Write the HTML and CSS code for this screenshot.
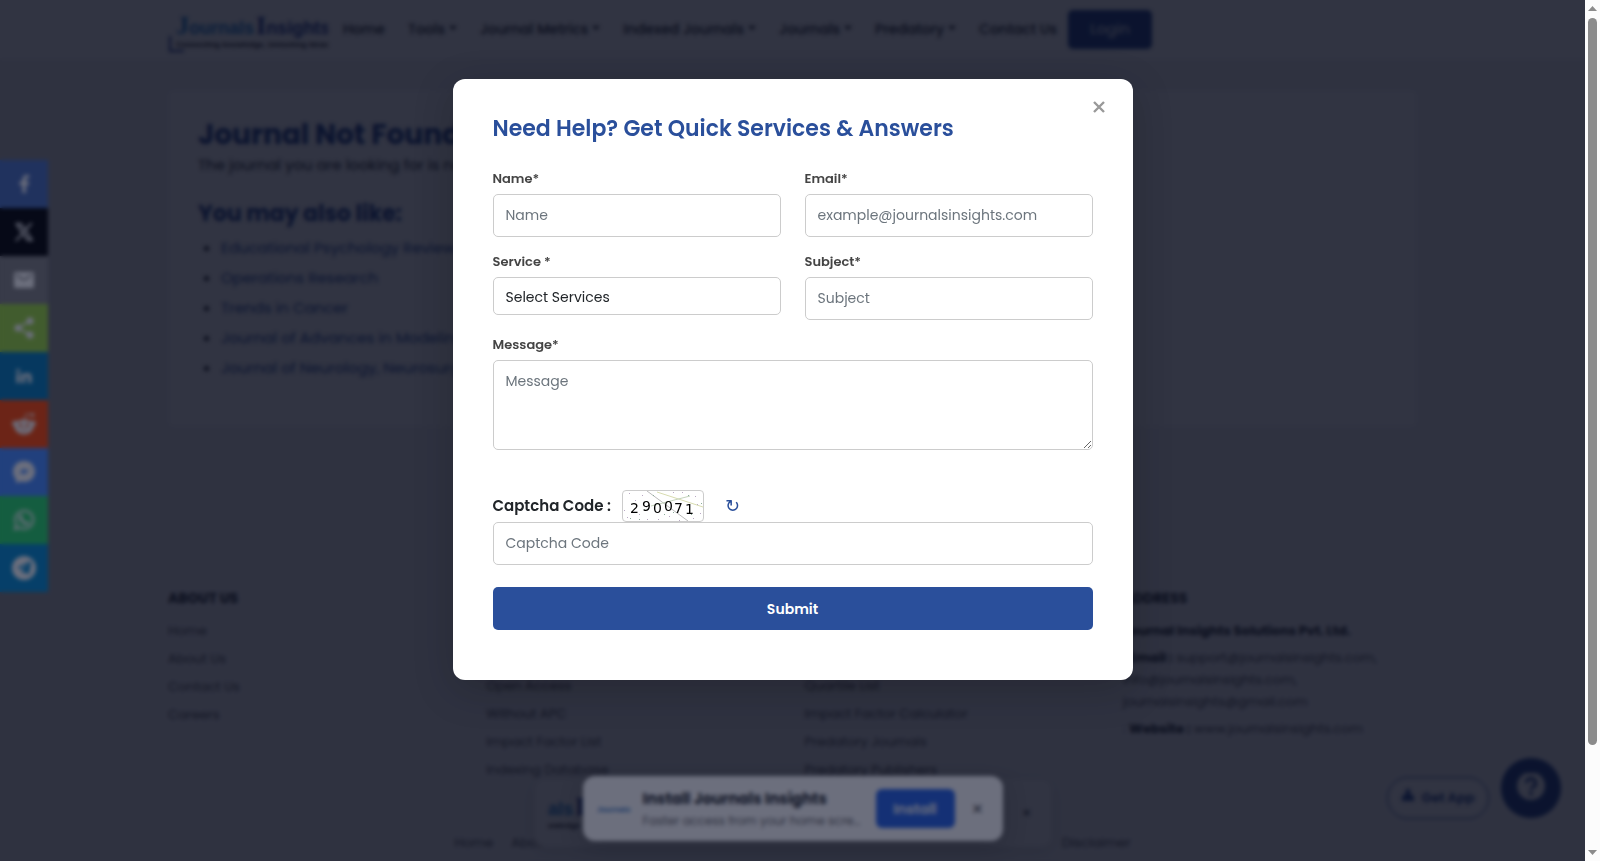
FILE: index.html
```html
<!DOCTYPE html>
<html lang="en">
<head>
<meta charset="utf-8">
<title>Journals Insights</title>
<link rel="stylesheet" href="styles.css">
</head>
<body>
<div class="viewport">
  <header class="topbar">
    <div class="container nav">
      <a class="logo" href="#" aria-label="Journals Insights">
        <svg width="160" height="42" viewBox="0 0 160 42">
          <path d="M2 24v15h14" fill="none" stroke="#1f3d94" stroke-width="2"/>
          <text x="8" y="22" class="logo-a">J<tspan class="logo-small">ournals</tspan></text>
          <text x="88" y="22" class="logo-b">I<tspan class="logo-small">nsights</tspan></text>
          <text x="8" y="35" class="logo-tag">Connecting knowledge, Unlocking Ideas</text>
        </svg>
      </a>
      <nav class="menu">
        <a href="#">Home</a>
        <a class="drop" href="#">Tools</a>
        <a class="drop" href="#">Journal Metrics</a>
        <a class="drop" href="#">Indexed Journals</a>
        <a class="drop" href="#">Journals</a>
        <a class="drop" href="#">Predatory</a>
        <a href="#">Contact Us</a>
      </nav>
      <button class="login" type="button">Login</button>
    </div>
  </header>

  <main class="container article">
    <h1>Journal Not Found</h1>
    <p>The journal you are looking for is not available.</p>
    <h2>You may also like:</h2>
    <ul>
      <li><a href="#">Educational Psychology Review</a></li>
      <li><a href="#">Operations Research</a></li>
      <li><a href="#">Trends in Cancer</a></li>
      <li><a href="#">Journal of Advances in Modeling</a></li>
      <li><a href="#">Journal of Neurology, Neurosurgery</a></li>
    </ul>
  </main>

  <footer class="container footer">
    <div>
      <h3>ABOUT US</h3>
      <a href="#">Home</a><a href="#">About Us</a><a href="#">Contact Us</a><a href="#">Careers</a>
    </div>
    <div class="lower">
      <a href="#">Open Access</a><a href="#">Without APC</a><a href="#">Impact Factor List</a><a href="#">Indexing Database</a>
    </div>
    <div class="lower">
      <a href="#">Quartile List</a><a href="#">Impact Factor Calculator</a><a href="#">Predatory Journals</a><a href="#">Predatory Publishers</a>
    </div>
    <div>
      <h3>ADDRESS</h3>
      <p><b>Journal Insights Solutions Pvt. Ltd.</b></p>
      <p>: <b>Email :</b> support@journalsinsights.com,<br>info@journalsinsights.com,<br>journalsinsights@gmail.com</p>
      <p>: <b>Website :</b> www.journalsinsights.com</p>
    </div>
  </footer>
  <div class="legal"><span><a href="#">Home</a><a href="#">About Us</a></span><a href="#">Disclaimer</a></div>

  <div class="old-banner">
    <svg width="50" height="36" viewBox="0 0 50 36"><text x="0" y="20" class="ghost-a">als</text><text x="27" y="20" class="ghost-b">I</text><text x="0" y="33" class="ghost-tag">owledge</text></svg>
    <span>×</span>
  </div>
  <button class="get-app" type="button">
    <svg width="14" height="20" viewBox="0 0 14 20"><path d="M5 1h4v5h3l-5 5-5-5h3zM1 8h3l3 3 3-3h3v5H1z" fill="#2a4f9b"/></svg>
    Get App
  </button>
  <button class="help" type="button" aria-label="Help">
    <svg width="30" height="30" viewBox="0 0 30 30"><circle cx="15" cy="13" r="14" fill="#fff"/><path d="M10.500 10a4.500 4.500 0 1 1 6.500 4c-1.500.8-2 1.400-2 2.500" fill="none" stroke="#20408c" stroke-width="3"/><circle cx="15" cy="20.500" r="2" fill="#20408c"/></svg>
  </button>
  <div class="page-shade"></div>

  <aside class="share">
    <a class="fb" href="#" aria-label="Facebook"><svg viewBox="0 0 24 24"><path d="M13.800 21v-8h2.800l.5-3.300h-3.300V7.600c0-1 .5-1.700 1.900-1.700h1.500V3.200C16.600 3.100 15.800 3 15 3c-2.700 0-4.500 1.600-4.500 4.400v2.300h-3V13h3v8z"/></svg></a>
    <a class="x" href="#" aria-label="X"><svg viewBox="0 0 24 24"><path fill-rule="evenodd" d="M3 3h6.200l4.200 5.800L18.500 3h2.300l-6.400 7.200L21.500 21h-6.200l-4.700-6.400L5 21H2.700l6.900-7.800zM6.300 4.700l9.800 14.600h2.200L8.500 4.700z"/></svg></a>
    <a class="mail" href="#" aria-label="Email"><svg viewBox="0 0 24 24"><path d="M3.500 4h17A1.500 1.500 0 0 1 22 5.500v13a1.500 1.500 0 0 1-1.500 1.500h-17A1.500 1.500 0 0 1 2 18.500v-13A1.500 1.500 0 0 1 3.500 4zm.5 2v2l8 5 8-5V6l-8 5z" fill-rule="evenodd"/></svg></a>
    <a class="st" href="#" aria-label="Share"><svg viewBox="0 0 24 24"><path d="M18 5 6 12l12 7" fill="none" stroke="#fff" stroke-width="2"/><circle cx="18" cy="5" r="3.500"/><circle cx="6" cy="12" r="3.500"/><circle cx="18" cy="19" r="3.500"/></svg></a>
    <a class="li" href="#" aria-label="LinkedIn"><svg viewBox="0 0 24 24"><path d="M4.500 9.500h3.200V19H4.500zM6.100 5a1.800 1.800 0 1 1 0 3.600 1.800 1.800 0 0 1 0-3.600zM9.700 9.500h3v1.300c.5-.9 1.500-1.600 3-1.600 3.200 0 3.800 2 3.800 4.700V19h-3.200v-4.600c0-1.100 0-2.500-1.600-2.500s-1.800 1.200-1.800 2.400V19H9.700z"/></svg></a>
    <a class="rd" href="#" aria-label="Reddit"><svg viewBox="0 0 24 24"><path d="M12.500 8 14 2l5 1" fill="none" stroke="#fff" stroke-width="1"/><circle cx="20.500" cy="3" r="1.800"/><circle cx="3" cy="11.500" r="2.700"/><circle cx="21" cy="11.500" r="2.700"/><path fill-rule="evenodd" d="M12 7.500c5.500 0 9.500 3 9.500 7s-4 8-9.500 8-9.500-4-9.500-8 4-7 9.500-7zM8.500 11.500a1.800 1.800 0 1 0 0 3.600 1.800 1.800 0 0 0 0-3.600zm7 0a1.800 1.800 0 1 0 0 3.600 1.800 1.800 0 0 0 0-3.600zM7.500 17c2.500 2.300 6.500 2.300 9 0-2.500 1-6.500 1-9 0z"/></svg></a>
    <a class="ms" href="#" aria-label="Messenger"><svg viewBox="0 0 24 24"><path fill-rule="evenodd" d="M12 1c6.500 0 11 4.700 11 10.500S18.500 22 12 22c-1.200 0-2.300-.2-3.300-.5L4 23v-4C2 17 1 14.500 1 11.500 1 5.700 5.500 1 12 1zM5.500 14.500l3.800-2 2.700 2 6.500-5.500-4 1.500-2.500-2z"/></svg></a>
    <a class="wa" href="#" aria-label="WhatsApp"><svg viewBox="0 0 24 24"><path d="m3 21 1.400-4.700a9 9 0 1 1 3.500 3.400z" fill="none" stroke="#fff" stroke-width="2"/><path d="M8.500 6.500 10 7l1 2.500-1 1.300c.8 1.600 2 2.700 3.500 3.400l1.200-1.300L17.300 14c0 2-1.300 3-3 3-4-.7-7-4-7.300-7.500 0-1.200.6-2.500 1.500-3z"/></svg></a>
    <a class="tg" href="#" aria-label="Telegram"><svg viewBox="0 0 24 24"><path fill-rule="evenodd" d="M12 0a12 12 0 1 1 0 24 12 12 0 0 1 0-24zM4.800 11.800l3.700 1.300L17 7.500l-7 6.500v4l2.300-2.300 3.500 2.600c.6.300 1 .1 1.200-.6L19.200 6.500c.2-.9-.3-1.300-1-1z"/></svg></a>
  </aside>
  <div class="install">
    <svg width="34" height="10" viewBox="0 0 34 10"><text x="0" y="8" class="mini-logo">Journals</text></svg>
    <div class="install-copy"><strong>Install Journals Insights</strong><span>Faster access from your home screen</span></div>
    <button class="install-go" type="button">Install</button>
    <button class="install-close" type="button" aria-label="Dismiss">×</button>
  </div>

  <div class="modal-shade">
    <form class="modal" role="dialog" aria-labelledby="modal-title">
      <button class="close" type="button" aria-label="Close"><svg width="12" height="12" viewBox="0 0 12 12"><path d="m1 1 10 10M11 1 1 11" stroke="#999" stroke-width="2.400" fill="none"/></svg></button>
      <h2 id="modal-title">Need Help? Get Quick Services &amp; Answers</h2>
      <div class="fields">
        <div class="field"><label for="name">Name*</label><input id="name" type="text" placeholder="Name"></div>
        <div class="field"><label for="email">Email*</label><input id="email" type="email" placeholder="example@journalsinsights.com"></div>
        <div class="field"><label for="service">Service *</label><select id="service"><option>Select Services</option></select></div>
        <div class="field"><label for="subject">Subject*</label><input id="subject" type="text" placeholder="Subject"></div>
        <div class="field wide"><label for="message">Message*</label><textarea id="message" placeholder="Message"></textarea></div>
      </div>
      <div class="captcha">
        <label for="captcha">Captcha Code :</label>
        <svg class="captcha-img" width="80" height="30" viewBox="0 0 80 30">
          <path d="m24 0 41 30" stroke="#bbb" fill="none"/><path d="m34 1 46 15" stroke="#d8dcb0" fill="none"/><path d="m28 15 39-10" stroke="#c5d4bd" fill="none"/>
          <g fill="#b9a8c4"><path d="M6 2h1v1H6zM12 9h1v1h-1zM4 26h1v1H4zM16 23h1v1h-1zM24 28h1v1h-1zM19 4h1v1h-1zM50 1h1v1h-1zM59 1h1v1h-1zM72 5h1v1h-1zM77 22h1v1h-1zM70 27h1v1h-1zM46 25h1v1h-1zM56 29h1v1h-1zM35 28h1v1h-1zM1 19h1v1H1zM74 13h1v1h-1z"/></g>
          <g fill="#8dae9b"><path d="M9 20h1v1H9zM21 18h1v1h-1zM7 27h1v1H7zM16 28h1v1h-1zM41 23h1v1h-1zM50 21h1v1h-1zM65 4h1v1h-1zM78 12h1v1h-1zM68 23h1v1h-1zM30 4h1v1h-1z"/></g>
          <g class="digits"><text x="7" y="22">2</text><text x="19" y="20">9</text><text x="30" y="22">0</text><text x="41" y="20">0</text><text x="51" y="22">7</text><text x="62" y="23">1</text></g>
        </svg>
        <button class="refresh" type="button" aria-label="Refresh captcha">↻</button>
      </div>
      <input id="captcha" type="text" placeholder="Captcha Code">
      <button class="submit" type="submit">Submit</button>
    </form>
  </div>
</div>
<div class="scrollbar">
  <svg width="9" height="5" viewBox="0 0 9 5"><path d="M0 5 4.500 0 9 5z" fill="#8b8b8b"/></svg>
  <div class="thumb"></div>
  <svg class="down" width="9" height="5" viewBox="0 0 9 5"><path d="M0 0 4.500 5 9 0z" fill="#8b8b8b"/></svg>
</div>
</body>
</html>
```

FILE: styles.css
```css
* { box-sizing: border-box; }

body {
  margin: 0;
  height: 100vh;
  display: flex;
  overflow: hidden;
  font-family: Poppins, Inter, "Open Sans", sans-serif;
  font-size: 15px;
  line-height: 24px;
  color: #212529;
}

button, input, select, textarea { font: inherit; }
button { border: 0; cursor: pointer; }
a { color: inherit; text-decoration: none; }
h1, h2, h3, p, ul { margin: 0; }

.viewport {
  position: relative;
  flex: 1;
  min-width: 0;
  overflow: hidden;
  background: #f5f6f7;
}

.container { width: calc(100% - 336px); margin: 0 auto; }

/* Header */
.topbar { background: #fff; height: 60px; }
.nav { display: flex; align-items: center; height: 58px; }
.logo { display: flex; margin-right: 15px; padding-top: 8px; }
.logo-a, .logo-b { font: bold 26px "Liberation Serif", serif; fill: #1c7fd0; }
.logo-b { fill: #1f3d94; }
.logo-small { font: bold 18px "Liberation Sans", sans-serif; }
.logo-tag { font: bold 8px "Liberation Sans", sans-serif; fill: #222; }
.menu { display: flex; gap: 23px; font-size: 14px; font-weight: 500; white-space: nowrap; }
.drop::after {
  content: "";
  display: inline-block;
  margin-left: 4px;
  vertical-align: 4px;
  border: 4px solid transparent;
  border-top-color: #212529;
  border-bottom: 0;
}
.login {
  margin-left: 11px;
  width: 84px;
  height: 39px;
  border-radius: 5px;
  background: #20408c;
  color: #fff;
}

/* Article */
.article {
  margin-top: 30px;
  padding: 28px 30px 44px;
  background: #fff;
  border-radius: 6px;
}
.article h1 { font-size: 28px; line-height: 34px; color: #20408c; }
.article p { margin-top: 1px; }
.article h2 { margin-top: 21px; font-size: 22px; line-height: 32px; color: #20408c; }
.article ul { margin-top: 3px; padding-left: 23px; line-height: 30px; }
.article li a { color: #2a4f9b; }

/* Footer */
.footer {
  display: grid;
  grid-template-columns: repeat(4, 1fr);
  column-gap: 24px;
  margin-top: 160px;
  font-size: 13px;
  line-height: 22px;
  color: #555;
}
.footer h3 { margin: 0 0 11px; font-size: 14px; color: #212529; }
.footer a { display: block; margin-bottom: 6px; }
.footer p { margin-bottom: 5px; }
.footer b { color: #212529; }
.footer .lower { padding-top: 88px; }
.legal {
  display: flex;
  justify-content: space-between;
  width: 676px;
  margin: 44px auto 0;
  font-size: 13px;
  color: #555;
}
.legal span { display: flex; gap: 18px; }

/* Floating items */
.old-banner {
  position: absolute;
  left: 50%;
  bottom: 14px;
  width: 518px;
  height: 68px;
  margin-left: -259px;
  padding: 0 20px 0 14px;
  display: flex;
  align-items: center;
  justify-content: space-between;
  background: #fff;
  border-radius: 10px;
  box-shadow: 0 4px 20px rgba(0, 0, 0, .1);
}
.ghost-a, .ghost-b { font: bold 18px "Liberation Sans", sans-serif; fill: #1c7fd0; }
.ghost-b { font: bold 26px "Liberation Serif", serif; fill: #1f3d94; }
.ghost-tag { font: bold 8px "Liberation Sans", sans-serif; fill: #222; }
.get-app {
  position: absolute;
  right: 96px;
  bottom: 42px;
  width: 102px;
  height: 42px;
  display: flex;
  align-items: center;
  justify-content: center;
  gap: 6px;
  border: 1px solid #2a4f9b;
  border-radius: 21px;
  background: #fff;
  color: #20408c;
  font-size: 13px;
  font-weight: 600;
  white-space: nowrap;
}
.help {
  position: absolute;
  right: 24px;
  bottom: 43px;
  width: 60px;
  height: 60px;
  padding: 0;
  display: grid;
  place-items: center;
  border-radius: 50%;
  background: #20408c;
}
.page-shade { position: absolute; inset: 0; background: rgba(0, 0, 0, .58); }

.share { position: absolute; left: 0; top: 160px; display: grid; }
.share a { width: 48px; height: 48px; display: grid; place-items: center; }
.share svg { width: 24px; height: 24px; fill: #fff; }
.fb { background: #4267b2; }
.x { background: #000; }
.mail { background: #7d7d7d; }
.st { background: #95d03a; }
.li { background: #0077b5; }
.rd { background: #ff4500; }
.ms { background: #448aff; }
.wa { background: #25d366; }
.tg { background: #0088cc; }

.install {
  position: absolute;
  left: 50%;
  bottom: 20px;
  width: 420px;
  height: 65px;
  margin-left: -210px;
  padding: 0 14px;
  display: flex;
  align-items: center;
  background: #fff;
  border-radius: 12px;
  box-shadow: 0 6px 24px rgba(0, 0, 0, .2);
}
.mini-logo { font: bold 8px "Liberation Sans", sans-serif; fill: #2a6fc0; }
.install-copy { display: grid; flex: 1; min-width: 0; margin-left: 12px; }
.install-copy strong { font-size: 15px; line-height: 24px; }
.install-copy span { font-size: 12px; line-height: 20px; color: #666; overflow: hidden; text-overflow: ellipsis; white-space: nowrap; }
.install-go {
  width: 79px;
  height: 39px;
  padding: 0;
  margin-left: 13px;
  border-radius: 6px;
  background: #2463eb;
  color: #fff;
  font-size: 14px;
  font-weight: 600;
}
.install-close { width: 22px; margin-left: 12px; padding: 0; background: none; color: #555; font-size: 20px; }

/* Enquiry dialog */
.modal-shade {
  position: absolute;
  inset: 0;
  padding-top: 79px;
  background: rgba(10, 15, 38, .6);
  backdrop-filter: blur(2px);
}
.modal {
  position: relative;
  display: flex;
  flex-direction: column;
  max-width: 680px;
  margin: 0 auto;
  padding: 33px 40px 50px;
  background: #fff;
  border-radius: 12px;
  box-shadow: 0 10px 40px rgba(0, 0, 0, .2);
}
.close { position: absolute; right: 22px; top: 16px; padding: 6px; background: none; line-height: 0; }
.modal h2 { font-size: 22px; line-height: 34px; font-weight: 600; color: #2a4f9b; }
.fields { display: grid; grid-template-columns: 1fr 1fr; gap: 15px 24px; margin-top: 23px; }
.wide { grid-column: 1 / -1; }
.field { display: flex; flex-direction: column; gap: 5px; }
.field label { font-size: 13px; line-height: 20px; font-weight: 600; color: #444; }
.modal input, .modal select, .modal textarea {
  width: 100%;
  padding: 10px 12px;
  border: 1px solid #ccc;
  border-radius: 5px;
  background: #fff;
  color: #212529;
  font-size: 14px;
  line-height: 21px;
}
.modal input { height: 43px; }
.modal select { height: 38px; padding: 9px 12px 6px; appearance: none; }
.modal textarea { height: 90px; display: block; resize: vertical; }
.modal ::placeholder { color: #6c757d; opacity: 1; }
.captcha { display: flex; align-items: center; margin-top: 40px; }
.captcha label { font-weight: 600; margin-right: 11px; line-height: 28px; }
.captcha-img { box-sizing: content-box; border: 1px solid #ccc; border-radius: 4px; }
.digits { font: 14px "DejaVu Sans", sans-serif; fill: #000; }
.refresh { margin-left: 15px; padding: 0 6px; background: none; color: #2a4f9b; font-size: 18px; line-height: 24px; font-family: "DejaVu Sans", sans-serif; }
.submit {
  margin-top: 22px;
  height: 43px;
  border-radius: 5px;
  background: #2a4f9b;
  color: #fff;
  font-size: 14px;
  font-weight: 600;
}

/* Page scrollbar */
.scrollbar {
  width: 15px;
  padding: 6px 3px;
  display: flex;
  flex-direction: column;
  align-items: center;
  background: #fcfcfc;
}
.thumb { width: 9px; height: 727px; flex-shrink: 1; margin-top: 7px; border-radius: 5px; background: #8b8b8b; }
.down { margin-top: auto; }
```
